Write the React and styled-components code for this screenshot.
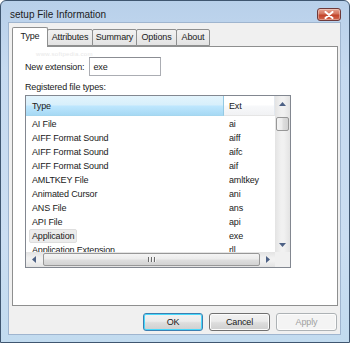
import React from "react";
import styled, { createGlobalStyle } from "styled-components";

const GlobalStyle = createGlobalStyle`
  html, body {
    margin: 0;
    padding: 0;
    background: #ffffff;
  }
  body {
    font-family: "Liberation Sans", Arial, sans-serif;
    font-size: 9px;
    letter-spacing: -0.15px;
    color: #1a1a1a;
  }
`;

const WindowFrame = styled.div`
  width: 350px;
  height: 343px;
  box-sizing: border-box;
  display: flex;
  flex-direction: column;
  border: 1px solid #3f5670;
  border-radius: 6px 6px 0 0;
  background: linear-gradient(to bottom, #b8d0ea 0%, #c6daf0 20%, #cbdef2 70%, #c2dbef 100%);
  overflow: hidden;
`;

const TitleBar = styled.div`
  height: 21px;
  box-sizing: border-box;
  padding: 6px 8px 0 9px;
  display: flex;
  align-items: center;
  justify-content: space-between;
`;

const Title = styled.span`
  font-size: 10px;
  letter-spacing: 0;
  color: #1c1c1c;
`;

const CloseButton = styled.div`
  width: 24px;
  height: 13px;
  box-sizing: border-box;
  border: 1px solid #6e3a3a;
  border-radius: 3px;
  background: linear-gradient(to bottom, #e8a493 0%, #d3735c 45%, #c2432a 55%, #d2684f 100%);
  display: flex;
  align-items: center;
  justify-content: center;
  box-shadow: inset 0 0 0 1px rgba(255, 255, 255, 0.35);
`;

const Client = styled.div`
  flex: 1;
  margin: 0 8px 7px 7px;
  box-sizing: border-box;
  border: 1px solid #9fb5cf;
  background: #f0f0f0;
  padding: 4px 2px 0 3px;
  display: flex;
  flex-direction: column;
`;

const TabStrip = styled.div`
  display: flex;
  align-items: flex-end;
  height: 19px;
  position: relative;
  z-index: 1;
`;

const Tab = styled.div`
  box-sizing: border-box;
  width: ${(p) => p.$w}px;
  height: ${(p) => (p.$active ? 20 : 17)}px;
  margin-bottom: ${(p) => (p.$active ? -1 : 0)}px;
  padding-top: ${(p) => (p.$active ? 3 : 2)}px;
  border: 1px solid #8e8f8f;
  border-bottom: ${(p) => (p.$active ? "none" : "1px solid #8e8f8f")};
  margin-left: ${(p) => (p.$first ? 0 : -1)}px;
  border-radius: 2px 2px 0 0;
  background: ${(p) =>
    p.$active ? "#ffffff" : "linear-gradient(to bottom, #f2f2f2, #e3e3e3)"};
  text-align: center;
  color: #1a1a1a;
`;

const Panel = styled.div`
  position: relative;
  width: 326px;
  height: 260px;
  box-sizing: border-box;
  border: 1px solid #8e8f8f;
  background: #ffffff;
  padding: 10px 0 0 12px;
  display: flex;
  flex-direction: column;
`;

const Watermark = styled.span`
  position: absolute;
  left: 23px;
  top: 4px;
  font-size: 6px;
  color: #e8e8e8;
  letter-spacing: 0.3px;
`;

const FieldRow = styled.div`
  display: flex;
  align-items: center;
  gap: 5px;
`;

const Label = styled.span`
  color: #1a1a1a;
`;

const TextBox = styled.div`
  width: 72px;
  height: 19px;
  box-sizing: border-box;
  border: 1px solid #abadb3;
  border-top-color: #8b8d93;
  padding: 0 3px;
  display: flex;
  align-items: center;
`;

const SectionLabel = styled.div`
  margin-top: 5px;
  height: 12px;
  line-height: 12px;
`;

const ListBox = styled.div`
  margin-top: 2px;
  width: 266px;
  height: 173px;
  box-sizing: border-box;
  border: 1px solid #828790;
  display: grid;
  grid-template-columns: 1fr 15px;
  grid-template-rows: 1fr 15px;
`;

const ListArea = styled.div`
  display: flex;
  flex-direction: column;
  overflow: hidden;
`;

const HeaderRow = styled.div`
  display: flex;
  height: 20px;
  flex-shrink: 0;
`;

const HeaderCell = styled.div`
  box-sizing: border-box;
  width: ${(p) => (p.$w ? `${p.$w}px` : "auto")};
  flex: ${(p) => (p.$w ? "none" : 1)};
  padding-left: ${(p) => p.$pad}px;
  display: flex;
  align-items: center;
  border-right: 1px solid ${(p) => (p.$hot ? "#93c9e3" : "#e3e8ee")};
  border-bottom: 1px solid ${(p) => (p.$hot ? "#a5d6ee" : "#e5e5e5")};
  background: ${(p) =>
    p.$hot
      ? "linear-gradient(to bottom, #e3f4fc 0%, #d8effb 45%, #bde6fd 55%, #a6d9f4 100%)"
      : "linear-gradient(to bottom, #ffffff 0%, #ffffff 45%, #f7f8fa 55%, #f1f2f4 100%)"};
`;

const Rows = styled.div`
  flex: 1;
  overflow: hidden;
  padding-top: 1px;
`;

const Row = styled.div`
  display: flex;
  height: 14px;
  align-items: center;
`;

const TypeCell = styled.div`
  width: 198px;
  padding-left: 3px;
  box-sizing: border-box;
  white-space: nowrap;
  overflow: hidden;
`;

const TypeText = styled.span`
  display: inline-block;
  padding: 1px 2px;
  border: 1px solid ${(p) => (p.$sel ? "#dedede" : "transparent")};
  border-radius: 2px;
  background: ${(p) => (p.$sel ? "#ececec" : "transparent")};
`;

const ExtCell = styled.div`
  padding-left: 5px;
  white-space: nowrap;
`;

const VScroll = styled.div`
  display: flex;
  flex-direction: column;
  background: linear-gradient(to right, #e3e3e3, #f1f1f1 40%, #f1f1f1 60%, #e3e3e3);
`;

const HScroll = styled.div`
  display: flex;
  align-items: stretch;
  background: linear-gradient(to bottom, #e3e3e3, #f1f1f1 40%, #f1f1f1 60%, #e3e3e3);
`;

const ArrowBox = styled.div`
  flex: none;
  width: 15px;
  height: 15px;
  display: flex;
  align-items: center;
  justify-content: center;
`;

const Track = styled.div`
  flex: 1;
  display: flex;
  flex-direction: ${(p) => (p.$vertical ? "column" : "row")};
  padding: ${(p) => (p.$vertical ? "6px 1px 0 1px" : "1px 0 1px 2px")};
`;

const Thumb = styled.div`
  box-sizing: border-box;
  ${(p) => (p.$vertical ? "height: 14px; width: 13px;" : "flex: 1; height: 13px;")}
  border: 1px solid #979797;
  border-radius: 2px;
  background: ${(p) =>
    p.$vertical
      ? "linear-gradient(to right, #f4f4f4 0%, #ececec 45%, #dedede 55%, #d2d2d2 100%)"
      : "linear-gradient(to bottom, #f4f4f4 0%, #ececec 45%, #dedede 55%, #d2d2d2 100%)"};
  display: flex;
  align-items: center;
  justify-content: center;
  gap: 1px;
`;

const Grip = styled.span`
  width: 1px;
  height: 5px;
  background: #6a6a6a;
  border-right: 1px solid #f5f5f5;
`;

const Corner = styled.div`
  background: #f0f0f0;
`;

const ButtonRow = styled.div`
  display: flex;
  justify-content: flex-end;
  gap: 6px;
  margin-top: 7px;
  padding-right: 1px;
`;

const Button = styled.div`
  width: ${(p) => p.$w}px;
  height: 18px;
  box-sizing: border-box;
  border: 1px solid ${(p) => (p.$focus ? "#3c7fb1" : p.$disabled ? "#adb2b5" : "#707070")};
  border-radius: 3px;
  background: ${(p) =>
    p.$disabled
      ? "#f4f4f4"
      : "linear-gradient(to bottom, #f2f2f2 0%, #ebebeb 45%, #dddddd 55%, #cfcfcf 100%)"};
  box-shadow: ${(p) =>
    p.$focus ? "inset 0 0 0 1px #48d8fb" : "inset 0 0 0 1px #fcfcfc"};
  display: flex;
  align-items: center;
  justify-content: center;
  color: ${(p) => (p.$disabled ? "#a0a0a0" : "#1a1a1a")};
`;

const Arrow = ({ dir }) => {
  const paths = {
    up: "M0 4 L3.5 0 L7 4 Z",
    down: "M0 0 L7 0 L3.5 4 Z",
    left: "M4 0 L4 7 L0 3.5 Z",
    right: "M0 0 L4 3.5 L0 7 Z",
  };
  const vertical = dir === "up" || dir === "down";
  return (
    <svg width={vertical ? 7 : 4} height={vertical ? 4 : 7} viewBox={vertical ? "0 0 7 4" : "0 0 4 7"}>
      <path d={paths[dir]} fill="#4d6185" />
    </svg>
  );
};

const CloseGlyph = () => (
  <svg width="10" height="8" viewBox="0 0 10 8">
    <path d="M1.5 1 L8.5 7 M8.5 1 L1.5 7" stroke="#ffffff" strokeWidth="2" strokeLinecap="round" />
  </svg>
);

const tabs = [
  { label: "Type", w: 36, active: true },
  { label: "Attributes", w: 46 },
  { label: "Summary", w: 45 },
  { label: "Options", w: 41 },
  { label: "About", w: 34 },
];

const fileTypes = [
  ["AI File", "ai"],
  ["AIFF Format Sound", "aiff"],
  ["AIFF Format Sound", "aifc"],
  ["AIFF Format Sound", "aif"],
  ["AMLTKEY File", "amltkey"],
  ["Animated Cursor", "ani"],
  ["ANS File", "ans"],
  ["API File", "api"],
  ["Application", "exe", true],
  ["Application Extension", "rll"],
];

const App = () => {
  return (
    <>
      <GlobalStyle />
      <WindowFrame>
        <TitleBar>
          <Title>setup File Information</Title>
          <CloseButton>
            <CloseGlyph />
          </CloseButton>
        </TitleBar>

        <Client>
          <TabStrip>
            {tabs.map((t, i) => (
              <Tab key={t.label} $w={t.w} $active={t.active} $first={i === 0}>
                {t.label}
              </Tab>
            ))}
          </TabStrip>

          <Panel>
            <Watermark>www.softpedia.com</Watermark>
            <FieldRow>
              <Label>New extension:</Label>
              <TextBox>exe</TextBox>
            </FieldRow>
            <SectionLabel>Registered file types:</SectionLabel>

            <ListBox>
              <ListArea>
                <HeaderRow>
                  <HeaderCell $w={198} $pad={6} $hot>
                    Type
                  </HeaderCell>
                  <HeaderCell $pad={5}>Ext</HeaderCell>
                </HeaderRow>
                <Rows>
                  {fileTypes.map(([name, ext, sel], i) => (
                    <Row key={i}>
                      <TypeCell>
                        <TypeText $sel={sel}>{name}</TypeText>
                      </TypeCell>
                      <ExtCell>{ext}</ExtCell>
                    </Row>
                  ))}
                </Rows>
              </ListArea>

              <VScroll>
                <ArrowBox>
                  <Arrow dir="up" />
                </ArrowBox>
                <Track $vertical>
                  <Thumb $vertical />
                </Track>
                <ArrowBox>
                  <Arrow dir="down" />
                </ArrowBox>
              </VScroll>

              <HScroll>
                <ArrowBox>
                  <Arrow dir="left" />
                </ArrowBox>
                <Track>
                  <Thumb>
                    <Grip />
                    <Grip />
                    <Grip />
                  </Thumb>
                </Track>
                <ArrowBox>
                  <Arrow dir="right" />
                </ArrowBox>
              </HScroll>
              <Corner />
            </ListBox>
          </Panel>

          <ButtonRow>
            <Button $w={60} $focus>
              OK
            </Button>
            <Button $w={61}>Cancel</Button>
            <Button $w={61} $disabled>
              Apply
            </Button>
          </ButtonRow>
        </Client>
      </WindowFrame>
    </>
  );
};

export default App;
